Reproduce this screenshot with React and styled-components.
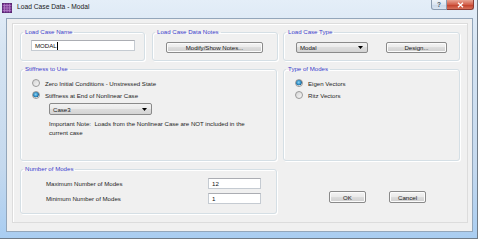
import styled, { createGlobalStyle } from "styled-components";

const GlobalStyle = createGlobalStyle`
  html, body {
    margin: 0;
    padding: 0;
    background: #ffffff;
  }
  body {
    font-family: "Liberation Sans", Arial, sans-serif;
    font-size: 6.1px;
    color: #1e1e1e;
  }
`;

const Window = styled.div`
  width: 478px;
  height: 239px;
  box-sizing: border-box;
  display: flex;
  flex-direction: column;
  background: linear-gradient(#e4eef8 0%, #d6e4f2 20%, #c5d9ee 70%, #a9cdf1 100%);
  border-right: 1px solid #707c88;
  border-bottom: 1px solid #707c88;
`;

const TitleBar = styled.div`
  height: 18px;
  display: flex;
  align-items: flex-start;
  padding-left: 2px;
`;

const TitleIcon = styled.svg`
  width: 10px;
  height: 10px;
  margin-top: 3px;
`;

const TitleText = styled.span`
  font-size: 6.7px;
  line-height: 8px;
  margin-top: 3px;
  margin-left: 5px;
  color: #1a1a1a;
`;

const Caption = styled.div`
  margin-left: auto;
  margin-right: 3px;
  display: flex;
  height: 11px;
`;

const CaptionButton = styled.div`
  width: ${({ $wide }) => ($wide ? 27 : 16)}px;
  height: 10px;
  box-sizing: border-box;
  display: flex;
  align-items: center;
  justify-content: center;
  border: 1px solid ${({ $danger }) => ($danger ? "#8c3a32" : "#8a9bb0")};
  border-top: none;
  border-left: ${({ $danger }) => ($danger ? "none" : "1px solid #8a9bb0")};
  border-radius: ${({ $danger }) => ($danger ? "0 0 3px 0" : "0 0 0 3px")};
  background: ${({ $danger }) =>
    $danger
      ? "linear-gradient(#e8a493 0%, #d3604b 50%, #c2402b 55%, #d7715a 100%)"
      : "linear-gradient(#eef3f9 0%, #dbe5f1 50%, #cad8e9 55%, #d9e4f1 100%)"};
  color: #4b5a6a;
  font-size: 6.5px;
  font-weight: bold;
`;

const Client = styled.div`
  flex: 1;
  margin: 0 4px 6px 6px;
  border: 1px solid #93a6ba;
  background: #f0f0f0;
  padding: 4px 4px 8px 5px;
  display: flex;
`;

const Panel = styled.div`
  flex: 1;
  border: 1px solid #dcdcdc;
  box-shadow: inset 1px 1px 0 #ffffff;
  padding: 4px 0 0 7px;
  display: grid;
  grid-template-columns: 257px 177px;
  grid-template-rows: 33px 96px 49px;
  grid-template-areas:
    "top type"
    "stiff modes"
    "count actions";
  column-gap: 6px;
  row-gap: 4px;
  align-content: start;
`;

const Pair = styled.div`
  grid-area: top;
  display: grid;
  grid-template-columns: 125px 126px;
  column-gap: 7px;
`;

const Group = styled.fieldset`
  grid-area: ${({ $area }) => $area || "auto"};
  margin: 0;
  padding: 0;
  min-width: 0;
  box-sizing: border-box;
  height: 100%;
  border: 1px solid #d5dfe5;
  border-radius: 3px;
  box-shadow: inset 1px 1px 0 #ffffff, 1px 1px 0 #ffffff;
`;

const Legend = styled.legend`
  margin-left: 2px;
  padding: 0 2px;
  line-height: 8px;
  color: #3b3bc8;
`;

const Body = styled.div`
  display: flex;
  flex-direction: column;
  padding-left: ${({ $inset }) => $inset || 0}px;
`;

const Row = styled.div`
  display: flex;
  align-items: center;
  height: ${({ $h }) => $h || 12}px;
  margin-top: ${({ $mt }) => $mt || 0}px;
  padding-left: ${({ $pl }) => $pl || 0}px;
  gap: ${({ $gap }) => $gap || 0}px;
`;

const TextBox = styled.div`
  width: ${({ $w }) => $w}px;
  height: 11px;
  box-sizing: border-box;
  background: #ffffff;
  border: 1px solid #c5cbd2;
  border-top-color: #abadb3;
  padding-left: 3px;
  display: flex;
  align-items: center;
  color: #111;
`;

const Caret = styled.span`
  display: inline-block;
  width: 1px;
  height: 8px;
  background: #000;
`;

const Button = styled.div`
  width: ${({ $w }) => $w}px;
  height: ${({ $h }) => $h || 11}px;
  box-sizing: border-box;
  border: 1px solid #8a8a8a;
  border-radius: 2px;
  background: linear-gradient(#f4f4f4 0%, #ebebeb 45%, #dddddd 50%, #cfcfcf 100%);
  box-shadow: inset 0 0 0 1px #fbfbfb;
  display: flex;
  align-items: center;
  justify-content: center;
  color: #1a1a1a;
`;

const Select = styled.div`
  width: ${({ $w }) => $w}px;
  height: ${({ $h }) => $h || 11}px;
  box-sizing: border-box;
  border: 1px solid #8a8a8a;
  border-radius: 2px;
  background: linear-gradient(#f2f2f2 0%, #ebebeb 45%, #dddddd 50%, #d4d4d4 100%);
  display: flex;
  align-items: center;
  padding: 0 4px 0 3px;
  color: #1a1a1a;

  span {
    flex: 1;
  }
`;

const Radio = styled.span`
  width: 8px;
  height: 8px;
  box-sizing: border-box;
  border-radius: 50%;
  border: 1px solid #9a9a9a;
  background: ${({ $on }) =>
    $on
      ? "radial-gradient(circle at 45% 40%, #8fd4f4 0%, #2a8bc4 45%, #1d5f8f 60%, #e4e4e4 65%, #f6f6f6 100%)"
      : "linear-gradient(135deg, #d4d4d4, #f7f7f7)"};
  margin-right: 5px;
  flex: none;
`;

const Note = styled.div`
  margin-top: 4px;
  padding-left: 17px;
  line-height: 9px;
  color: #1e1e1e;
`;

const FieldLabel = styled.span`
  width: 162px;
`;

const Actions = styled.div`
  grid-area: actions;
  display: flex;
  align-items: flex-end;
  gap: 23px;
  padding: 0 0 11px 46px;
`;

const Arrow = () => (
  <svg width="5" height="3" viewBox="0 0 5 3">
    <path d="M0 0 L5 0 L2.5 3 Z" fill="#000" />
  </svg>
);

export default function App() {
  return (
    <>
      <GlobalStyle />
      <Window>
        <TitleBar>
          <TitleIcon viewBox="0 0 10 10">
            <rect x="0" y="0" width="10" height="10" fill="#7b3c96" />
            <path
              d="M2.5 0 V10 M5 0 V10 M7.5 0 V10 M0 2.5 H10 M0 5 H10 M0 7.5 H10"
              stroke="#b884cc"
              strokeWidth="0.7"
            />
            <rect x="0.3" y="0.3" width="9.4" height="9.4" fill="none" stroke="#4e1f66" strokeWidth="0.6" />
          </TitleIcon>
          <TitleText>Load Case Data - Modal</TitleText>
          <Caption>
            <CaptionButton>?</CaptionButton>
            <CaptionButton $wide $danger>
              <svg width="7" height="6" viewBox="0 0 7 6">
                <path d="M1 0.8 L6 5.2 M6 0.8 L1 5.2" stroke="#ffffff" strokeWidth="1.3" />
              </svg>
            </CaptionButton>
          </Caption>
        </TitleBar>

        <Client>
          <Panel>
            <Pair>
              <Group>
                <Legend>Load Case Name</Legend>
                <Body $inset={10}>
                  <Row $h={11} $mt={4}>
                    <TextBox $w={104}>
                      MODAL
                      <Caret />
                    </TextBox>
                  </Row>
                </Body>
              </Group>
              <Group>
                <Legend>Load Case Data Notes</Legend>
                <Body $inset={13}>
                  <Row $h={11} $mt={6}>
                    <Button $w={97}>Modify/Show Notes...</Button>
                  </Row>
                </Body>
              </Group>
            </Pair>

            <Group $area="type">
              <Legend>Load Case Type</Legend>
              <Body $inset={12}>
                <Row $h={11} $mt={6} $gap={18}>
                  <Select $w={72}>
                    <span>Modal</span>
                    <Arrow />
                  </Select>
                  <Button $w={61}>Design...</Button>
                </Row>
              </Body>
            </Group>

            <Group $area="stiff">
              <Legend>Stiffness to Use</Legend>
              <Body $inset={11}>
                <Row $mt={4}>
                  <Radio />
                  Zero Initial Conditions - Unstressed State
                </Row>
                <Row>
                  <Radio $on />
                  Stiffness at End of Nonlinear Case
                </Row>
                <Row $mt={2} $pl={17}>
                  <Select $w={103} $h={12}>
                    <span>Case3</span>
                    <Arrow />
                  </Select>
                </Row>
                <Note>
                  Important Note:&nbsp; Loads from the Nonlinear Case are NOT included in the
                  <br />
                  current case
                </Note>
              </Body>
            </Group>

            <Group $area="modes">
              <Legend>Type of Modes</Legend>
              <Body $inset={11}>
                <Row $mt={4}>
                  <Radio $on />
                  Eigen Vectors
                </Row>
                <Row>
                  <Radio />
                  Ritz Vectors
                </Row>
              </Body>
            </Group>

            <Group $area="count">
              <Legend>Number of Modes</Legend>
              <Body $inset={25}>
                <Row $h={11} $mt={5}>
                  <FieldLabel>Maximum Number of Modes</FieldLabel>
                  <TextBox $w={53}>12</TextBox>
                </Row>
                <Row $h={11} $mt={4}>
                  <FieldLabel>Minimum Number of Modes</FieldLabel>
                  <TextBox $w={53}>1</TextBox>
                </Row>
              </Body>
            </Group>

            <Actions>
              <Button $w={37} $h={12}>OK</Button>
              <Button $w={37} $h={12}>Cancel</Button>
            </Actions>
          </Panel>
        </Client>
      </Window>
    </>
  );
}
